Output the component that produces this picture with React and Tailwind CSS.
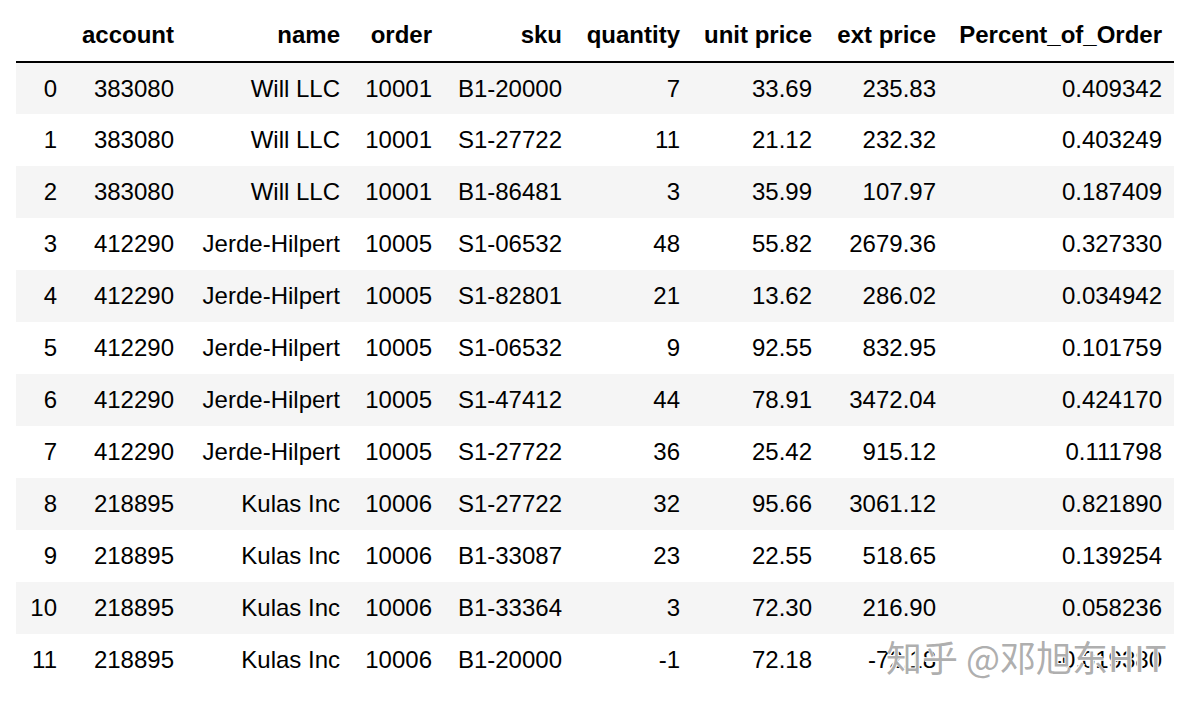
import React from 'react';

const columns = ['account', 'name', 'order', 'sku', 'quantity', 'unit price', 'ext price', 'Percent_of_Order'];
const widths = ['w-[53px]', 'w-[117px]', 'w-[166px]', 'w-[92px]', 'w-[130px]', 'w-[118px]', 'w-[132px]', 'w-[124px]', 'w-[226px]'];

const rows = [
    ['383080', 'Will LLC', '10001', 'B1-20000', '7', '33.69', '235.83', '0.409342'],
    ['383080', 'Will LLC', '10001', 'S1-27722', '11', '21.12', '232.32', '0.403249'],
    ['383080', 'Will LLC', '10001', 'B1-86481', '3', '35.99', '107.97', '0.187409'],
    ['412290', 'Jerde-Hilpert', '10005', 'S1-06532', '48', '55.82', '2679.36', '0.327330'],
    ['412290', 'Jerde-Hilpert', '10005', 'S1-82801', '21', '13.62', '286.02', '0.034942'],
    ['412290', 'Jerde-Hilpert', '10005', 'S1-06532', '9', '92.55', '832.95', '0.101759'],
    ['412290', 'Jerde-Hilpert', '10005', 'S1-47412', '44', '78.91', '3472.04', '0.424170'],
    ['412290', 'Jerde-Hilpert', '10005', 'S1-27722', '36', '25.42', '915.12', '0.111798'],
    ['218895', 'Kulas Inc', '10006', 'S1-27722', '32', '95.66', '3061.12', '0.821890'],
    ['218895', 'Kulas Inc', '10006', 'B1-33087', '23', '22.55', '518.65', '0.139254'],
    ['218895', 'Kulas Inc', '10006', 'B1-33364', '3', '72.30', '216.90', '0.058236'],
    ['218895', 'Kulas Inc', '10006', 'B1-20000', '-1', '72.18', '-72.18', '-0.019380'],
];

const App = () => {
    return (
        <div className="relative w-[1196px] h-[708px] bg-white text-black font-['Liberation_Sans',Arial,sans-serif] text-[24px]">
            <table className="ml-4 w-[1158px] table-fixed border-collapse">
                <colgroup>
                    {widths.map((w, i) => (
                        <col key={i} className={w} />
                    ))}
                </colgroup>
                <thead>
                    <tr className="h-[62px] border-b-2 border-black">
                        <th></th>
                        {columns.map((c) => (
                            <th key={c} className="text-right font-bold align-bottom pr-3 pb-[12px] leading-7 whitespace-nowrap">
                                {c}
                            </th>
                        ))}
                    </tr>
                </thead>
                <tbody>
                    {rows.map((r, i) => (
                        <tr key={i} className={i % 2 === 0 ? 'h-[52px] bg-[#f5f5f5]' : 'h-[52px] bg-white'}>
                            <th className="text-right font-normal pr-3 leading-7">{i}</th>
                            {r.map((v, j) => (
                                <td key={j} className="text-right pr-3 leading-7 whitespace-nowrap">
                                    {v}
                                </td>
                            ))}
                        </tr>
                    ))}
                </tbody>
            </table>
            {/* zhihu watermark */}
            <div className="absolute left-[886px] top-[638px] text-[36px] leading-none whitespace-nowrap text-[#999999]/80 font-['Noto_Sans_CJK_SC',sans-serif] [text-shadow:1px_1px_0_#fff,-1px_-1px_0_#fff]">
                知乎 @邓旭东HIT
            </div>
        </div>
    );
};

export default App;
